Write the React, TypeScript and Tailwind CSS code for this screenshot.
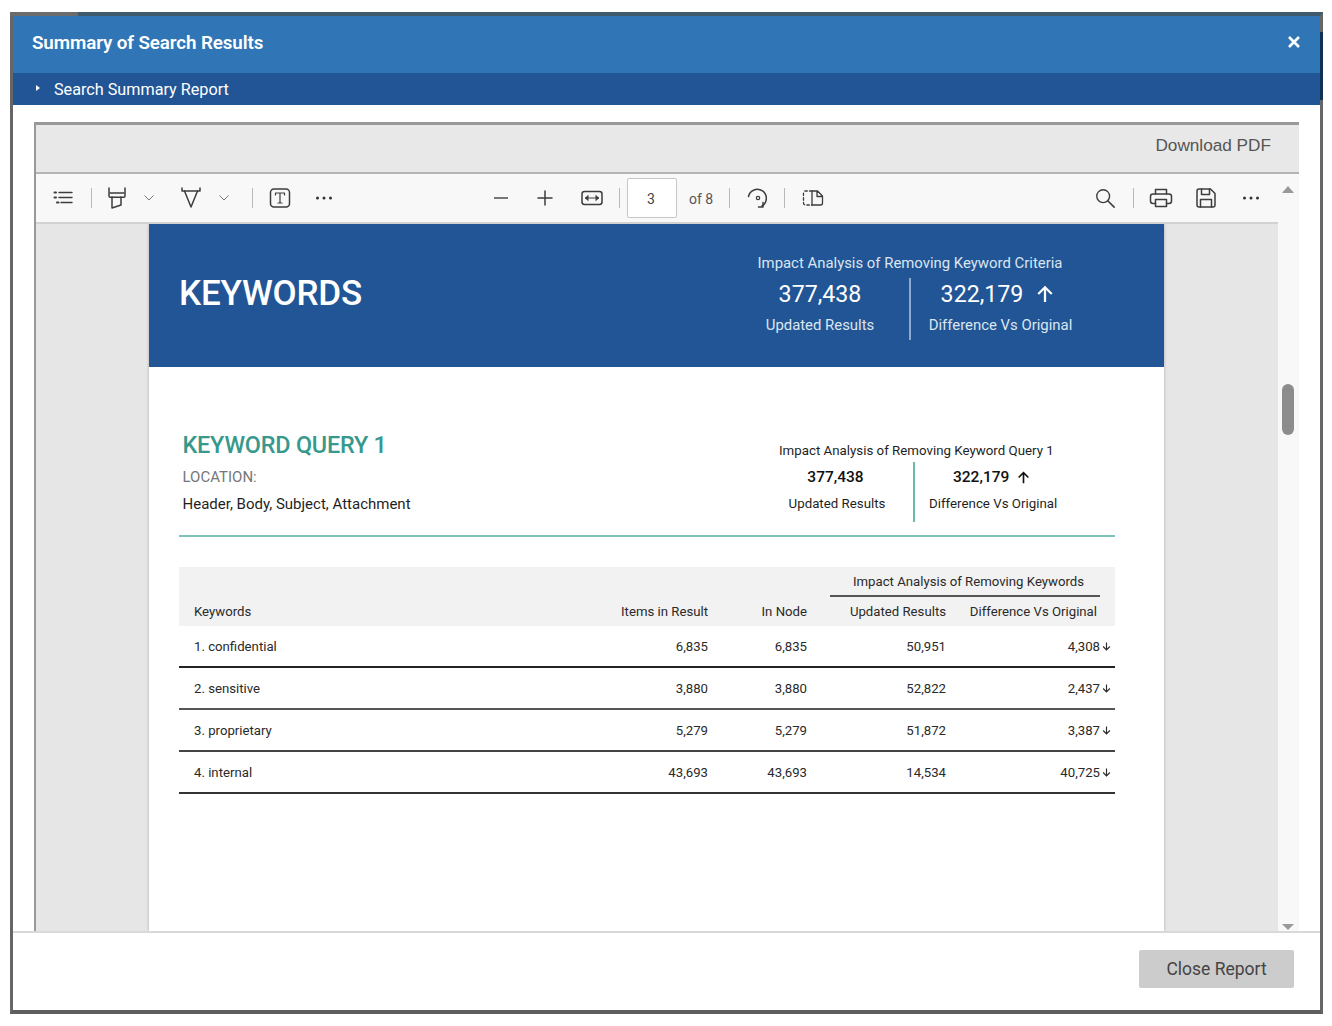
// App.tsx
const Sep = ({ className = '' }: { className?: string }) => (
    <span className={`block w-px h-[20px] bg-[#b9b9b9] shrink-0 ${className}`} />
);

const Icon = ({ className = '', children, box = '0 0 24 24' }: { className?: string; children: React.ReactNode; box?: string }) => (
    <svg viewBox={box} fill="none" stroke="#3d3d3d" strokeWidth="1.5" strokeLinecap="round" strokeLinejoin="round" className={`block shrink-0 ${className}`}>
        {children}
    </svg>
);

const Dots = ({ className = '' }: { className?: string }) => (
    <svg viewBox="0 0 18 4" className={`block w-[18px] h-[4px] shrink-0 ${className}`} fill="#333">
        <circle cx="2.5" cy="2" r="1.5" />
        <circle cx="9" cy="2" r="1.5" />
        <circle cx="15.5" cy="2" r="1.5" />
    </svg>
);

const Chevron = ({ className = '' }: { className?: string }) => (
    <svg viewBox="0 0 10 6" fill="none" stroke="#777" strokeWidth="1" className={`block w-[10px] h-[6px] shrink-0 ${className}`}>
        <path d="M0.5 0.5 5 5 9.5 0.5" />
    </svg>
);

const Arrow = ({ up, className = '' }: { up?: boolean; className?: string }) => (
    <svg viewBox="0 0 16 16" fill="none" stroke="currentColor" strokeWidth="2" className={`inline-block shrink-0 ${className}`}>
        {up ? <path d="M8 15V2M2 8l6-6 6 6" /> : <path d="M8 1v13M2 8l6 6 6-6" />}
    </svg>
);

const rows = [
    { name: '1. confidential', items: '6,835', node: '6,835', updated: '50,951', diff: '4,308', line: 'border-[#222]' },
    { name: '2. sensitive', items: '3,880', node: '3,880', updated: '52,822', diff: '2,437', line: 'border-[#555]' },
    { name: '3. proprietary', items: '5,279', node: '5,279', updated: '51,872', diff: '3,387', line: 'border-[#444]' },
    { name: '4. internal', items: '43,693', node: '43,693', updated: '14,534', diff: '40,725', line: 'border-[#333]' },
];

const Toolbar = () => (
    <div className="h-[50px] bg-[#f8f8f8] border-b-2 border-[#d2d2d2] flex items-center pb-[1px] shrink-0">
        <Icon className="w-[24px] h-[24px] ml-[16px]">
            <path d="M7 6.5h13M7 11.5h13M9 16.5h11" strokeWidth="1.4" />
            <path d="M2.5 6.5h1.5M2.5 11.5h1.5M5 16.5h1.5" strokeWidth="2" />
        </Icon>
        <Sep className="ml-[15px]" />
        <Icon className="w-[24px] h-[24px] ml-[13px]">
            <path d="M4 2v8c0 .8.6 1.2 1.2 1.2h13.6c.6 0 1.2-.4 1.2-1.200V2" />
            <path d="M5 7h14M7 11v11l9-3v-8" />
        </Icon>
        <Chevron className="ml-[15px]" />
        <Icon className="w-[24px] h-[24px] ml-[25px]">
            <path d="M3 2v3h18V2" />
            <path d="M5.5 5 12 21l6.500-16" />
        </Icon>
        <Chevron className="ml-[16px]" />
        <Sep className="ml-[23px]" />
        <Icon className="w-[22px] h-[22px] ml-[16px]" box="0 0 22 22">
            <rect x="1.5" y="2" width="19" height="18" rx="3.5" />
            <path d="M6.5 8V6h9v2M11 6v10M9 16h4" strokeWidth="1.2" />
        </Icon>
        <Dots className="ml-[24px]" />
        <svg viewBox="0 0 14 2" className="block w-[14px] h-[2px] ml-[161px] shrink-0" fill="#777"><rect width="14" height="2" /></svg>
        <Icon className="w-[16px] h-[16px] ml-[29px]" box="0 0 16 16">
            <path d="M8 1v14M1 8h14" />
        </Icon>
        <Icon className="w-[22px] h-[18px] ml-[28px]" box="0 0 22 18">
            <rect x="1" y="2.5" width="20" height="13" rx="2.5" />
            <path d="M4.5 9h13" strokeWidth="1" />
            <path d="M7 6.5 4 9l3 2.5zM15 6.5 18 9l-3 2.5z" fill="#3d3d3d" strokeWidth=".6" />
        </Icon>
        <Sep className="ml-[16px]" />
        <div className="w-[50px] h-[40px] ml-[7px] bg-white border border-[#c8c8c8] rounded-[2px] flex items-center justify-center pt-[3px] pr-[2px] text-[14px] text-[#444] shrink-0">3</div>
        <span className="ml-[12px] mt-[3px] text-[14px] text-[#555] whitespace-nowrap">of 8</span>
        <Sep className="ml-[16px]" />
        <Icon className="w-[24px] h-[24px] ml-[16px]">
            <path d="M2.5 10.5A9 9 0 1 1 16 20" />
            <path d="M17 16.5V21h-4.5" />
            <circle cx="12" cy="12" r="1.7" strokeWidth="1.2" />
        </Icon>
        <Sep className="ml-[14px]" />
        <Icon className="w-[22px] h-[18px] ml-[17px]" box="0 0 22 18">
            <path d="M10 2H3.500A2 2 0 0 0 1.500 4v10a2 2 0 0 0 2 2H10" strokeDasharray="2.5 2.2" strokeWidth="1.3" />
            <path d="M10 2h5.500l5 5v7a2 2 0 0 1-2 2H10zM15 2v5.500h5.500" strokeWidth="1.3" />
        </Icon>
        <Icon className="w-[22px] h-[22px] ml-[270px]">
            <circle cx="10" cy="10" r="7" strokeWidth="1.5" />
            <path d="M15 15l7 7" strokeWidth="1.7" />
        </Icon>
        <Sep className="ml-[17px]" />
        <Icon className="w-[24px] h-[24px] ml-[15px]">
            <path d="M6.500 8V3.500h11V8" />
            <path d="M6.500 17.500H4A2.500 2.500 0 0 1 1.500 15v-4.500A2.500 2.500 0 0 1 4 8h16a2.500 2.500 0 0 1 2.500 2.500V15a2.500 2.500 0 0 1-2.500 2.500h-2.500" />
            <path d="M6.500 13.500h11v7h-11z" />
        </Icon>
        <Icon className="w-[22px] h-[22px] ml-[22px]" box="0 0 22 22">
            <path d="M4 2h11.500L20 6.500V18a2 2 0 0 1-2 2H4a2 2 0 0 1-2-2V4a2 2 0 0 1 2-2z" />
            <path d="M6.500 2v5.500h8V2M5.500 20v-7.500h11V20" />
        </Icon>
        <Dots className="ml-[25px]" />
    </div>
);

const PageHeader = () => (
    <div className="h-[143px] bg-[#215595] text-white flex shrink-0">
        <div className="w-[581px] pl-[30px] pt-[48px] text-[35px] leading-[44px] font-medium tracking-[-0.2px]">KEYWORDS</div>
        <div className="w-[360px] pt-[29px] flex flex-col items-center text-[#dbe5f0]">
            <div className="text-[14.9px] leading-[20px] whitespace-nowrap">Impact Analysis of Removing Keyword Criteria</div>
            <div className="flex mt-[5px]">
                <div className="w-[181px] h-[62px] border-r-2 border-[#8fabcc] flex flex-col items-center pl-[1px]">
                    <div className="text-[23.2px] leading-[32px] text-white">377,438</div>
                    <div className="text-[14.9px] leading-[20px] mt-[5px]">Updated Results</div>
                </div>
                <div className="w-[179px] flex flex-col items-center">
                    <div className="text-[23.2px] leading-[32px] text-white flex items-center pr-[6px]">
                        322,179
                        <Arrow up className="w-[18px] h-[18px] ml-[13px]" />
                    </div>
                    <div className="text-[14.9px] leading-[20px] mt-[5px] whitespace-nowrap">Difference Vs Original</div>
                </div>
            </div>
        </div>
    </div>
);

const QuerySummary = () => (
    <div className="ml-[30px] mr-[49px] h-[170px] border-b-2 border-[#7cc4b8] flex text-[#1f1f1f] shrink-0">
        <div className="w-[566px] pl-[3.5px] pt-[63px]">
            <div className="text-[#37998c] text-[23.4px] leading-[30px] font-medium tracking-[-0.2px]">KEYWORD QUERY 1</div>
            <div className="text-[15px] leading-[20px] text-[#777] mt-[7px]">LOCATION:</div>
            <div className="text-[15px] leading-[20px] mt-[7px] whitespace-nowrap">Header, Body, Subject, Attachment</div>
        </div>
        <div className="w-[360px] pt-[73px] flex flex-col">
            <div className="text-[13.3px] leading-[22px] pl-[34px] whitespace-nowrap">Impact Analysis of Removing Keyword Query 1</div>
            <div className="flex">
                <div className="w-[170px] h-[60px] border-r-2 border-[#6bb8ac] flex flex-col items-center pl-[16px]">
                    <div className="text-[15.5px] leading-[22px] font-medium text-[#111] mt-[4px] -ml-[3px]">377,438</div>
                    <div className="text-[13.3px] leading-[18px] mt-[7px]">Updated Results</div>
                </div>
                <div className="flex-1 flex flex-col items-start pl-[14px]">
                    <div className="text-[15.5px] leading-[22px] font-medium text-[#111] mt-[4px] ml-[24px] flex items-center">
                        322,179
                        <Arrow up className="w-[13px] h-[13px] ml-[8px]" />
                    </div>
                    <div className="text-[13.3px] leading-[18px] mt-[7px] whitespace-nowrap">Difference Vs Original</div>
                </div>
            </div>
        </div>
    </div>
);

const KeywordTable = () => (
    <div className="ml-[30px] mr-[49px] mt-[30px] text-[13.2px] text-[#2a2a2a] shrink-0">
        <div className="h-[59px] bg-[#f2f2f2] flex flex-col">
            <div className="h-[30px] flex justify-end pr-[15px]">
                <div className="w-[270px] h-[30px] border-b-2 border-[#555] text-center pl-[7px] leading-[29px] whitespace-nowrap">Impact Analysis of Removing Keywords</div>
            </div>
            <div className="flex-1 grid grid-cols-[1fr_100px_99px_139px_165px] items-center pl-[15px] pr-[4px] pt-[1px]">
                <div>Keywords</div>
                <div className="text-right">Items in Result</div>
                <div className="text-right">In Node</div>
                <div className="text-right">Updated Results</div>
                <div className="text-right pr-[14px] whitespace-nowrap">Difference Vs Original</div>
            </div>
        </div>
        {rows.map(r => (
            <div key={r.name} className={`h-[42px] border-b-2 ${r.line} grid grid-cols-[1fr_100px_99px_139px_165px] items-center pl-[15px] pr-[4px] pt-[2px]`}>
                <div>{r.name}</div>
                <div className="text-right">{r.items}</div>
                <div className="text-right">{r.node}</div>
                <div className="text-right">{r.updated}</div>
                <div className="flex items-center justify-end">
                    {r.diff}
                    <Arrow className="w-[9px] h-[9px] ml-[2px]" />
                </div>
            </div>
        ))}
    </div>
);

const Scrollbar = () => (
    <div className="w-[21px] bg-[#f8f8f8] flex flex-col items-center shrink-0 pr-[1px]">
        <div className="mt-[12px] w-0 h-0 border-x-[6px] border-x-transparent border-b-[7px] border-b-[#999]" />
        <div className="mt-[191px] w-[12px] h-[51px] rounded-[6px] bg-[#8c8c8c]" />
        <div className="mt-auto mb-[1px] w-0 h-0 border-x-[6px] border-x-transparent border-t-[6px] border-t-[#999]" />
    </div>
);

const App = () => {
    return (
        <div className="w-[1332px] h-[1026px] bg-white pt-[12px] pl-[10px] font-['Roboto',sans-serif] overflow-hidden">
            <div className="relative w-[1313px] h-[1002px] border-x-[3px] border-b-[4px] border-t-[4px] border-x-[#666] border-b-[#5e5e5e] border-t-[#3f5a6a] flex flex-col">
                <span className="absolute -top-[4px] -left-[3px] w-[68px] h-[4px] bg-[#6b6b6b]" />
                <span className="absolute top-[16px] -right-[3px] w-[3px] h-[68px] bg-[#12304f]" />
                <div className="h-[57px] bg-[#3076b6] flex items-center justify-between pl-[19px] pr-[20px] text-white shrink-0">
                    <span className="text-[18.8px] font-semibold tracking-[-0.1px] mb-[2px]">Summary of Search Results</span>
                    <svg viewBox="0 0 12 12" stroke="white" strokeWidth="2.6" className="block w-[12px] h-[12px] mb-[5px]"><path d="M1 1l10 10M11 1 1 11" /></svg>
                </div>
                <div className="h-[32px] bg-[#215595] flex items-center pl-[23px] text-white shrink-0">
                    <span className="w-0 h-0 border-y-[3.5px] border-y-transparent border-l-[4px] border-l-white mb-[3px]" />
                    <span className="ml-[14px] text-[16.2px] mt-[3px]">Search Summary Report</span>
                </div>
                <div className="flex-1 min-h-0 pt-[17px] pl-[21px] pr-[21px] flex overflow-hidden">
                    <div className="flex-1 flex flex-col border-l-[2px] border-t-[3px] border-[#999] min-w-0">
                        <div className="h-[49px] bg-[#e8e8e8] border-b-2 border-[#b4b4b4] flex items-center justify-end pr-[28px] pb-[5px] text-[17.2px] text-[#555] font-['Liberation_Sans',sans-serif] shrink-0">Download PDF</div>
                        <div className="flex-1 flex min-h-0">
                            <div className="flex-1 flex flex-col min-w-0">
                                <Toolbar />
                                <div className="flex-1 bg-[#e6e6e6] pl-[113px] min-h-0 overflow-hidden">
                                    <div className="w-[1015px] h-full bg-white flex flex-col shadow-[0_0_3px_rgba(0,0,0,0.25)]">
                                        <PageHeader />
                                        <QuerySummary />
                                        <KeywordTable />
                                    </div>
                                </div>
                            </div>
                            <Scrollbar />
                        </div>
                    </div>
                </div>
                <div className="h-[79px] border-t-2 border-[#d9d9d9] bg-white flex justify-end pt-[17px] pr-[26px] shrink-0">
                    <button className="w-[155px] h-[38px] bg-[#cccccc] rounded-[2px] text-[17.5px] text-[#444]">Close Report</button>
                </div>
            </div>
        </div>
    );
};

export default App;
